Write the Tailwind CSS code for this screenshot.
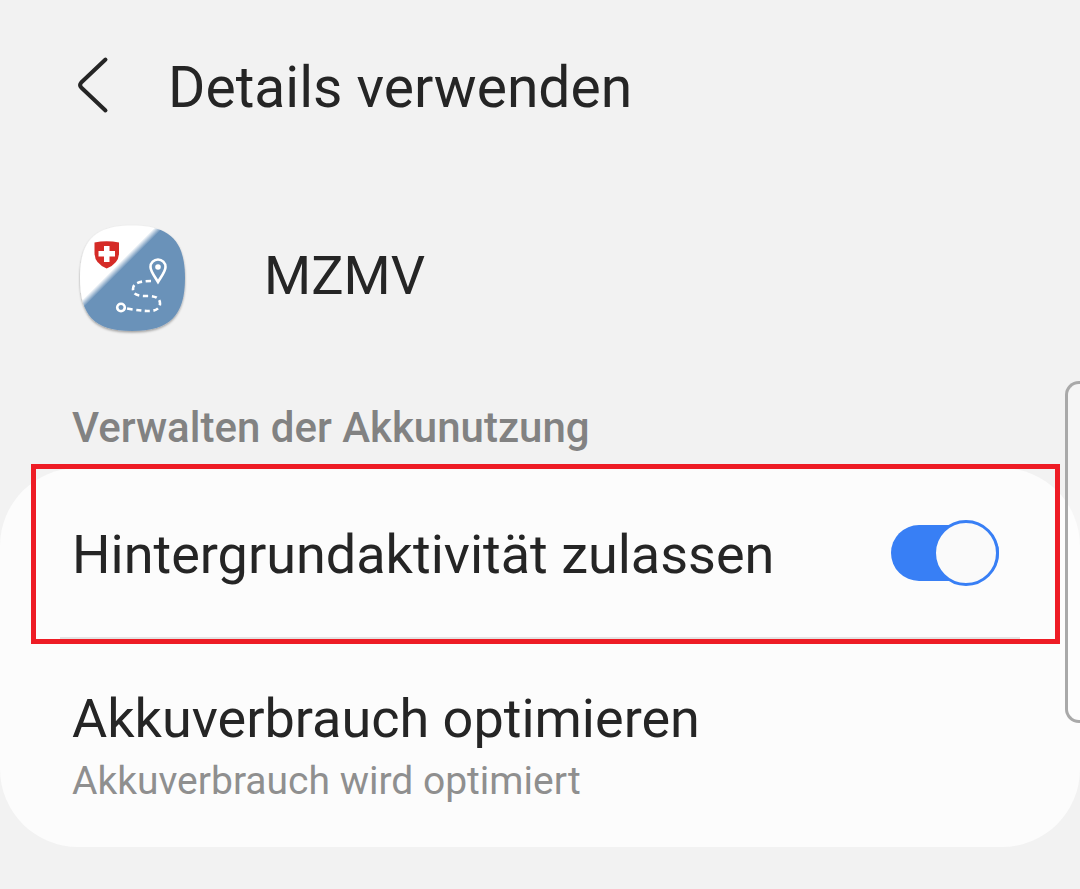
<!DOCTYPE html>
<html lang="de">
<head>
  <meta charset="UTF-8">
  <meta name="viewport" content="width=device-width, initial-scale=1.0">
  <title>Details verwenden</title>
  <script src="https://cdn.jsdelivr.net/npm/@tailwindcss/browser@4"></script>
</head>
<body class="bg-[#f2f2f2] text-[#252525] font-[Roboto,sans-serif] min-h-screen relative overflow-x-hidden">

  <header class="flex items-center pt-12 pl-[72px]">
    <button type="button" aria-label="Zurück" class="w-24 h-20 flex items-center">
      <svg class="w-10 h-16" viewBox="0 0 40 64" fill="none" stroke="#252525" stroke-width="4" stroke-linecap="round" stroke-linejoin="round">
        <path d="M33.500 3.500 9.200 26.500Q7 29 9.200 31.500L33.500 54.500"/>
      </svg>
    </button>
    <h1 class="text-[57px] leading-[80px]">Details verwenden</h1>
  </header>

  <main>
    <section class="flex items-center gap-[72px] pt-[88px] pl-[72px]">
      <!-- App-Symbol -->
      <svg class="w-[120px] h-[128px]" viewBox="0 0 120 128" aria-hidden="true">
        <defs>
          <linearGradient id="grund" gradientUnits="userSpaceOnUse" x1="46.500" y1="47.500" x2="51" y2="52">
            <stop offset="0" stop-color="#fff"/>
            <stop offset="1" stop-color="#6b92b9"/>
          </linearGradient>
          <filter id="schatten" x="-20%" y="-20%" width="140%" height="140%">
            <feDropShadow dx="0" dy="1.500" stdDeviation="1.200" flood-opacity="0.350"/>
          </filter>
        </defs>
        <path filter="url(#schatten)" fill="url(#grund)" d="M60 9.500C98 9.500 113 25 113 62S98 115 60 115 8 99 8 62 22 9.500 60 9.500Z"/>
        <path fill="#d52b27" d="M22.500 26.500Q34.500 24 47 26.500V37Q47 47.500 34.700 52.500Q22.500 47.500 22.500 37Z"/>
        <path fill="#fff" d="M32 30h5.500v5h5.500v5.500h-5.500v5.500H32V40.500h-5.500v-5.500H32Z"/>
        <g fill="none" stroke="#fff" stroke-width="2.600">
          <path d="M86 66C81 58 78.500 55 78.500 51A7.500 7.500 0 0 1 93.500 51C93.500 55 91 58 86 66Z"/>
          <circle cx="49" cy="91.500" r="3.800"/>
          <path stroke-dasharray="5.200 3.600" d="M79 65C68 65 61 67 61 73C61 80.500 70 80 77 80C85 80 88 83.500 88 87.500C88 93.500 82 95.500 75 95Q66 94.500 55 92.500"/>
        </g>
        <circle cx="86" cy="51" r="2.800" fill="#fff"/>
      </svg>
      <h2 class="text-[54px] leading-[64px] pb-2">MZMV</h2>
    </section>

    <h3 class="pt-[60px] pb-4 pl-[72px] text-[42px] leading-[48px] font-medium text-[#828282]">Verwalten der Akkunutzung</h3>

    <section class="relative bg-[#fcfcfc] rounded-[78px] pb-10">
      <div class="mx-[60px] border-b-3 border-[#e3e3e3] flex items-center justify-between pl-3 pr-[21px] h-[172px]">
        <label for="hintergrund" class="pt-1 text-[54px] leading-[64px]">Hintergrundaktivität zulassen</label>
        <span class="relative flex items-center w-[108px] h-[66px]">
          <input id="hintergrund" type="checkbox" checked class="peer appearance-none w-full h-14 rounded-full bg-[#b5b5b5] checked:bg-[#387ff5]">
          <span class="pointer-events-none absolute left-0 top-0 peer-checked:left-auto peer-checked:right-0 size-[66px] rounded-full border-3 border-[#387ff5] bg-[#fafafa]"></span>
        </span>
      </div>
      <div class="px-[72px] pt-[47px]">
        <h4 class="text-[54px] leading-[64px]">Akkuverbrauch optimieren</h4>
        <p class="pt-1 text-[39px] leading-[52px] text-[#8f8f8f]">Akkuverbrauch wird optimiert</p>
      </div>
      <!-- Markierung -->
      <div class="pointer-events-none absolute left-[31px] right-5 -top-1 h-[180px] border-5 border-[#ee1c25]"></div>
    </section>
  </main>

  <!-- Griff der Seitenleiste -->
  <aside class="absolute right-0 top-[381px] w-[15px] h-[342px] rounded-l-[14px] border-3 border-r-0 border-[#a9a9a9] bg-white/30"></aside>

</body>
</html>
